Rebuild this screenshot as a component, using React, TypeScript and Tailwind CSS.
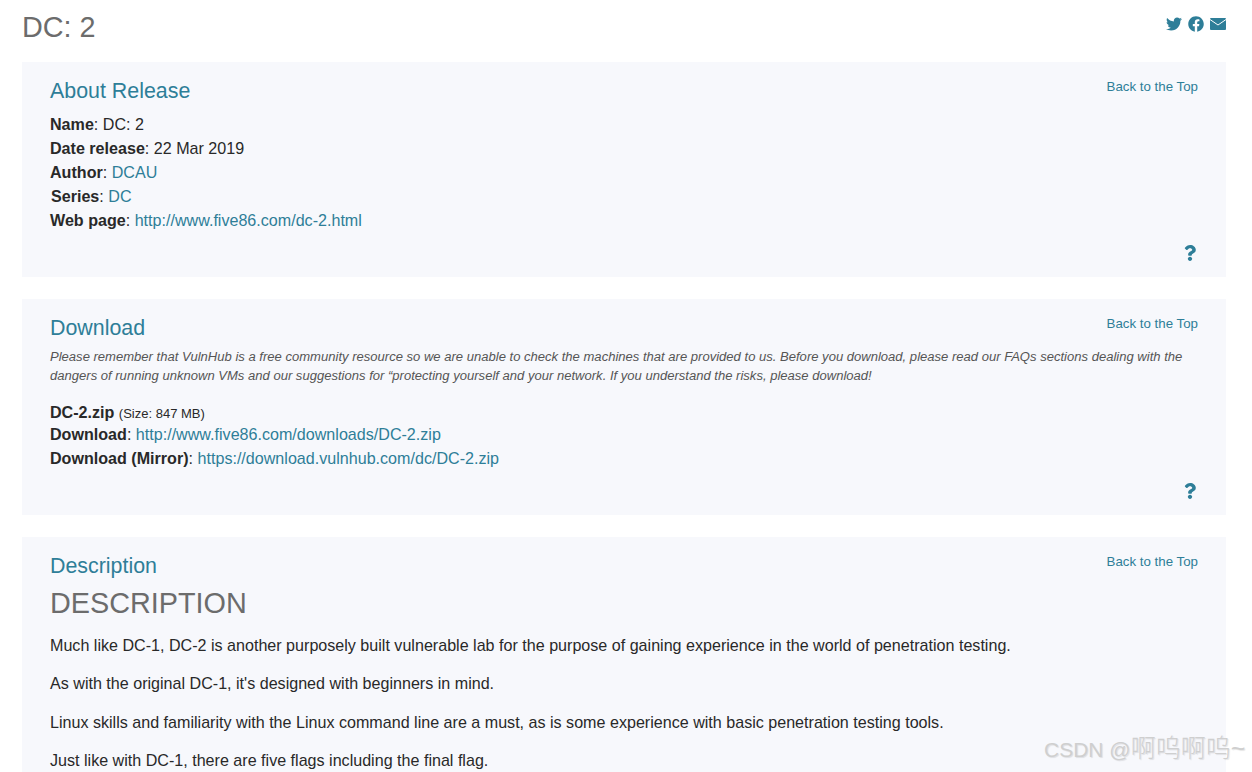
import { FaTwitter, FaFacebook, FaQuestion } from 'react-icons/fa'

function Link({ children }: { children: React.ReactNode }) {
  return <a className="text-[#2e7e98]">{children}</a>
}

function Panel({ title, children, help = true }: { title: string; children: React.ReactNode; help?: boolean }) {
  return (
    <section className="relative bg-[#f7f8fc] pl-7 pr-7 pt-[15px] pb-[15px] mb-[22px]">
      <a className="absolute right-[28px] top-[15px] text-[13.3px] leading-[20px] text-[#2e7e98]">Back to the Top</a>
      <h2 className="text-[21.4px] leading-[28px] text-[#2e7e98]">{title}</h2>
      {children}
      {help && (
        <div className="flex justify-end items-center h-[18px]">
          <FaQuestion className="text-[#2e7e98] w-[16px] h-[16px]" />
        </div>
      )}
    </section>
  )
}

export default function App() {
  return (
    <div className="relative h-[772px] overflow-hidden bg-white pl-[22px] pr-[26px] text-[16.1px] leading-[24.2px] text-[#292929] font-['Liberation_Sans',Arial,sans-serif]">
      <header className="flex items-start justify-between h-[62px] pt-[7px]">
        <h1 className="text-[28.8px] leading-[40px] text-[#6c6c6c]">DC: 2</h1>
        <div className="flex items-center gap-[6px] pt-[9px] text-[#2e7e98]">
          <FaTwitter className="w-[16px] h-[16px]" />
          <FaFacebook className="w-[16px] h-[16px]" />
          <svg viewBox="0 0 16 12" className="w-[16px] h-[12px]">
            <rect width="16" height="12" rx="1" fill="currentColor" />
            <path d="M0 1.5 L8 7 L16 1.5" fill="none" stroke="#fff" strokeWidth="1" />
          </svg>
        </div>
      </header>

      <Panel title="About Release">
        <ul className="mt-[6.5px] h-[132.5px]">
          <li><b>Name</b>: DC: 2</li>
          <li><b>Date release</b>: 22 Mar 2019</li>
          <li><b>Author</b>: <Link>DCAU</Link></li>
          <li className="pl-[1px]"><b>Series</b>: <Link>DC</Link></li>
          <li><b>Web page</b>: <Link>http://www.five86.com/dc-2.html</Link></li>
        </ul>
      </Panel>

      <Panel title="Download">
        <p className="mt-[5px] text-[13.05px] leading-[19px] italic text-[#555]">
          Please remember that VulnHub is a free community resource so we are unable to check the machines that are provided to us. Before you download, please read our FAQs sections dealing with the dangers of running unknown VMs and our suggestions for “protecting yourself and your network. If you understand the risks, please download!
        </p>
        <ul className="mt-[15px] h-[82px]">
          <li className="h-[22.2px]"><b>DC-2.zip</b> <small className="text-[13px]">(Size: 847 MB)</small></li>
          <li><b>Download</b>: <Link>http://www.five86.com/downloads/DC-2.zip</Link></li>
          <li><b>Download (Mirror)</b>: <Link>https://download.vulnhub.com/dc/DC-2.zip</Link></li>
        </ul>
      </Panel>

      <Panel title="Description" help={false}>
        <h3 className="mt-[5px] text-[28.8px] leading-[36px] text-[#6c6c6c]">DESCRIPTION</h3>
        <div className="mt-[12px] flex flex-col gap-[14.2px]">
          <p>Much like DC-1, DC-2 is another purposely built vulnerable lab for the purpose of gaining experience in the world of penetration testing.</p>
          <p>As with the original DC-1, it's designed with beginners in mind.</p>
          <p>Linux skills and familiarity with the Linux command line are a must, as is some experience with basic penetration testing tools.</p>
          <p>Just like with DC-1, there are five flags including the final flag.</p>
        </div>
      </Panel>

      {/* CSDN watermark */}
      <div className="absolute left-[1044px] top-[734px] whitespace-nowrap text-[21px] leading-[28px] text-[#cfcfcf] [text-shadow:1px_1px_1px_rgba(0,0,0,0.1)] font-['Liberation_Sans','Noto_Sans_CJK_SC',sans-serif]">
        CSDN @<span className="text-[25px] font-light">啊呜啊呜~</span>
      </div>
    </div>
  )
}
